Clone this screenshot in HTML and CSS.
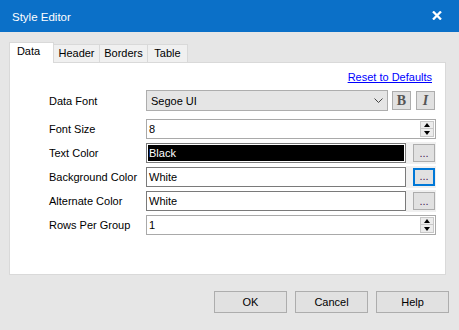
FILE: index.html
```html
<!DOCTYPE html>
<html lang="en">
<head>
  <meta charset="UTF-8" />
  <title>Style Editor</title>
  <link rel="stylesheet" href="styles.css">
</head>
<body>
  <div class="window">
    <div class="titlebar">
      <span class="title">Style Editor</span>
      <span class="close">
        <svg width="10" height="9" viewBox="0 0 10 9"><path d="M1 0.5 L9 8.5 M9 0.5 L1 8.5" stroke="#fff" stroke-width="2.3"/></svg>
      </span>
    </div>

    <div class="tabs">
      <div class="tab active" style="width: 45px">Data</div>
      <div class="tab" style="width: 46px">Header</div>
      <div class="tab" style="width: 48px">Borders</div>
      <div class="tab" style="width: 40px">Table</div>
    </div>

    <div class="panel">
      <div class="reset-row"><a href="#">Reset to Defaults</a></div>

      <div class="row row-first">
        <label>Data Font</label>
        <div class="combo">
          <span>Segoe UI</span>
          <svg class="chevron" width="9" height="5" viewBox="0 0 9 5"><path d="M0.5 0.5 L4.5 4.5 L8.5 0.5" stroke="#444" fill="none"/></svg>
        </div>
        <button class="style-btn bold">B</button>
        <button class="style-btn italic">I</button>
      </div>

      <div class="row">
        <label>Font Size</label>
        <div class="field light wide">
          <span class="value">8</span>
          <div class="spin">
            <div class="spin-half"><span class="arrow-up"></span></div>
            <div class="spin-half"><span class="arrow-down"></span></div>
          </div>
        </div>
      </div>

      <div class="row">
        <label>Text Color</label>
        <div class="field dark black"><span class="value">Black</span></div>
        <div class="btn-wrap"><button class="dots">...</button></div>
      </div>

      <div class="row">
        <label>Background Color</label>
        <div class="field dark"><span class="value">White</span></div>
        <div class="btn-wrap"><button class="dots focused">...</button></div>
      </div>

      <div class="row">
        <label>Alternate Color</label>
        <div class="field dark"><span class="value">White</span></div>
        <div class="btn-wrap"><button class="dots">...</button></div>
      </div>

      <div class="row">
        <label>Rows Per Group</label>
        <div class="field light wide">
          <span class="value">1</span>
          <div class="spin">
            <div class="spin-half"><span class="arrow-up"></span></div>
            <div class="spin-half"><span class="arrow-down"></span></div>
          </div>
        </div>
      </div>
    </div>

    <div class="actions">
      <button class="action">OK</button>
      <button class="action">Cancel</button>
      <button class="action">Help</button>
    </div>
  </div>
</body>
</html>
```

FILE: styles.css
```css
body {
  margin: 0;
  font-family: 'Liberation Sans', Arial, sans-serif;
  font-size: 11px;
  color: #000;
  background-color: #e6e6e6;
}
.window {
  width: 459px;
  height: 330px;
  background-color: #e6e6e6;
}
.titlebar {
  height: 32px;
  background-color: #0b70c8;
  display: flex;
  align-items: center;
  justify-content: space-between;
  padding: 0 17px 0 12px;
  color: white;
}
.title {
  font-size: 11.5px;
  margin-top: 1px;
}
.close {
  display: flex;
  margin-top: -1px;
}
.tabs {
  display: flex;
  align-items: flex-end;
  margin: 10px 0 0 9px;
  height: 20px;
  position: relative;
  z-index: 1;
}
.tab {
  box-sizing: border-box;
  height: 18px;
  line-height: 17px;
  text-align: center;
  background-color: #f0f0f0;
  border: 1px solid #d9d9d9;
  border-bottom: none;
  border-left: none;
}
.tab.active {
  height: 21px;
  line-height: 16px;
  background-color: #fff;
  border-left: 1px solid #d9d9d9;
  margin-bottom: -1px;
  padding-right: 6px;
}
.panel {
  box-sizing: border-box;
  width: 437px;
  height: 213px;
  margin-left: 9px;
  background-color: #fff;
  border: 1px solid #d9d9d9;
  padding: 7px 9px 0 39px;
}
.reset-row {
  text-align: right;
  line-height: 14px;
  padding-right: 4px;
}
.reset-row a {
  color: #0000ff;
}
.row {
  display: flex;
  align-items: center;
  height: 20px;
  margin-top: 4px;
}
.row-first {
  height: 21px;
  margin-top: 6px;
  margin-bottom: 8px;
}
.row label {
  width: 97px;
  flex-shrink: 0;
}
.combo {
  box-sizing: border-box;
  width: 242px;
  height: 21px;
  background-color: #e5e5e5;
  border: 1px solid #adadad;
  display: flex;
  align-items: center;
  justify-content: space-between;
  padding: 0 4px 0 4px;
}
.style-btn {
  box-sizing: border-box;
  width: 19px;
  height: 19px;
  padding: 0;
  background-color: #e1e1e1;
  border: 1px solid #adadad;
  font-family: 'Liberation Serif', 'Times New Roman', serif;
  font-size: 14px;
  color: #555;
  line-height: 16px;
}
.bold {
  margin-left: 4px;
  font-weight: bold;
}
.italic {
  margin-left: 5px;
  font-weight: bold;
  font-style: italic;
}
.field {
  box-sizing: border-box;
  height: 20px;
  width: 260px;
  display: flex;
  align-items: center;
  justify-content: space-between;
  background-color: #fff;
}
.field.dark {
  border: 1px solid #7a7a7a;
}
.field.light {
  border: 1px solid #a9a9a9;
}
.field.wide {
  width: 290px;
}
.value {
  padding-left: 2px;
}
.field.black .value {
  background-color: #000;
  color: #fff;
  margin: 1px;
  flex: 1;
  align-self: stretch;
  line-height: 16px;
  padding-left: 1px;
}
.spin {
  display: flex;
  flex-direction: column;
  width: 14px;
  margin-right: 1px;
}
.spin-half {
  box-sizing: border-box;
  height: 8px;
  background-color: #ececec;
  border: 1px solid #c8c8c8;
  display: flex;
  align-items: center;
  justify-content: center;
}
.spin-half + .spin-half {
  border-top: none;
}
.arrow-up {
  border-left: 3.5px solid transparent;
  border-right: 3.5px solid transparent;
  border-bottom: 4px solid #000;
}
.arrow-down {
  border-left: 3.5px solid transparent;
  border-right: 3.5px solid transparent;
  border-top: 4px solid #000;
}
.btn-wrap {
  width: 30px;
  height: 22px;
  background-color: #f0f0f0;
  display: flex;
  align-items: center;
  justify-content: flex-end;
  padding-right: 1px;
  box-sizing: border-box;
}
.dots {
  box-sizing: border-box;
  width: 22px;
  height: 18px;
  padding: 0 0 3px 0;
  background-color: #e1e1e1;
  border: 1px solid #adadad;
  font-family: 'Liberation Sans', Arial, sans-serif;
  font-size: 11px;
  color: #402050;
  line-height: 10px;
  display: flex;
  align-items: flex-end;
  justify-content: center;
}
.dots.focused {
  border: 2px solid #0078d7;
}
.actions {
  display: flex;
  justify-content: flex-end;
  gap: 8px;
  margin-top: 16px;
  padding-right: 10px;
}
.action {
  box-sizing: border-box;
  width: 73px;
  height: 22px;
  background-color: #e1e1e1;
  border: 1px solid #adadad;
  font-family: 'Liberation Sans', Arial, sans-serif;
  font-size: 11px;
  color: #000;
  padding: 0;
}
```
